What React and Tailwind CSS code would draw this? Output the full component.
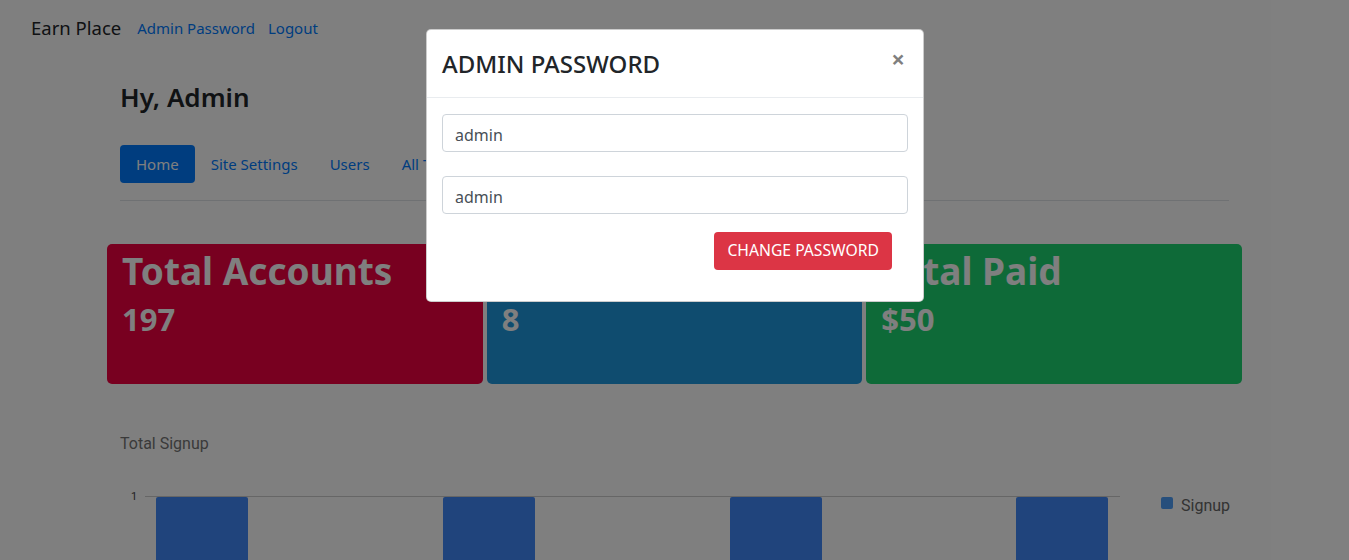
import { useState } from "react";

const font = { fontFamily: '"Noto Sans", "Open Sans", sans-serif' };

const cards = [
  { title: "Total Accounts", value: "197", bg: "bg-[#f00040]" },
  { title: "Total Users", value: "8", bg: "bg-[#1e98de]" },
  { title: "Total Paid", value: "$50", bg: "bg-[#1cd470]" },
];

// Signup chart, drawn as svg
const SignupChart = () => {
  const bars = [36, 323, 610, 896];
  return (
    <svg width="1110" height="80" className="block">
      <text x="11" y="20" fontSize="11" fill="#444" fontFamily="Roboto, sans-serif">1</text>
      <line x1="25" y1="16.5" x2="1000" y2="16.5" stroke="#ccc" strokeWidth="1" />
      {bars.map((x) => (
        <rect key={x} x={x} y="17" width="92" height="80" rx="2" fill="#4088f8" />
      ))}
      <rect x="1041" y="17" width="12" height="12" rx="2" fill="#4e9ef8" />
      <text x="1061" y="31" fontSize="16" fill="#666" fontFamily="Roboto, sans-serif">Signup</text>
    </svg>
  );
};

export default function App() {
  const [pass, setPass] = useState("admin");
  const [confirm, setConfirm] = useState("admin");

  return (
    <div className="relative h-[560px] overflow-hidden bg-white text-[#212529]" style={font}>
      {/* Navbar */}
      <nav className="flex items-center h-[56px] px-[31px]">
        <span className="text-[18.5px] mr-[16px]">Earn Place</span>
        <a className="text-[15px] text-[#007bff] mr-[13px]">Admin Password</a>
        <a className="text-[15px] text-[#007bff]">Logout</a>
      </nav>

      <div className="mx-[120px]">
        <h3 className="text-[26px] font-semibold mt-[26px] mb-[32px] leading-[1.2]">Hy, Admin</h3>
        <div className="flex items-center pb-[17px] border-b border-[#dee2e6]">
          <a className="bg-[#007bff] text-white rounded px-4 h-[38px] flex items-center text-[15px]">Home</a>
          <a className="text-[#007bff] px-4 text-[15px]">Site Settings</a>
          <a className="text-[#007bff] px-4 text-[15px]">Users</a>
          <a className="text-[#007bff] px-4 text-[15px]">All Transactions</a>
        </div>
      </div>

      {/* Stat cards */}
      <div className="mx-[107px] mt-[43px] grid grid-cols-3 gap-[4px]">
        {cards.map((c) => (
          <div key={c.title} className={`${c.bg} rounded-[5px] h-[140px] px-[15px] pt-[3px] text-white`}>
            <div className="text-[37px] font-bold leading-[1.3]">{c.title}</div>
            <div className="text-[31px] font-bold leading-[1.3] mt-[4px]">{c.value}</div>
          </div>
        ))}
      </div>

      <div className="mx-[120px] mt-[48px]">
        <div className="text-[16px] text-[#757575]" style={{ fontFamily: "Roboto, sans-serif" }}>Total Signup</div>
        <div className="mt-[24px]">
          <SignupChart />
        </div>
      </div>

      {/* Backdrop */}
      <div className="absolute inset-0 bg-black/50" />

      {/* Modal */}
      <div className="absolute left-[426px] top-[29px] w-[498px] bg-white rounded-[5px] border border-black/20">
        <div className="flex items-center justify-between h-[68px] px-[15px] border-b border-[#e9ecef]">
          <h4 className="text-[24px] font-medium text-[#212529] leading-none">ADMIN PASSWORD</h4>
          <button className="text-[24px] font-bold text-black/50 leading-none pr-[3px] -mt-[10px]">×</button>
        </div>
        <div className="px-[15px] pt-[16px] pb-[31px]">
          <input
            value={pass}
            onChange={(e) => setPass(e.target.value)}
            className="block w-full h-[38px] px-3 pt-[3px] text-[16px] text-[#495057] border border-[#ced4da] rounded-[4px] outline-none"
          />
          <input
            value={confirm}
            onChange={(e) => setConfirm(e.target.value)}
            className="block w-full h-[38px] px-3 pt-[3px] mt-[24px] text-[16px] text-[#495057] border border-[#ced4da] rounded-[4px] outline-none"
          />
          <div className="flex justify-end pr-[16px] mt-[18px]">
            <button className="bg-[#dc3545] text-white text-[15.7px] h-[38px] px-[13px] rounded-[4px]">CHANGE PASSWORD</button>
          </div>
        </div>
      </div>
    </div>
  );
}
